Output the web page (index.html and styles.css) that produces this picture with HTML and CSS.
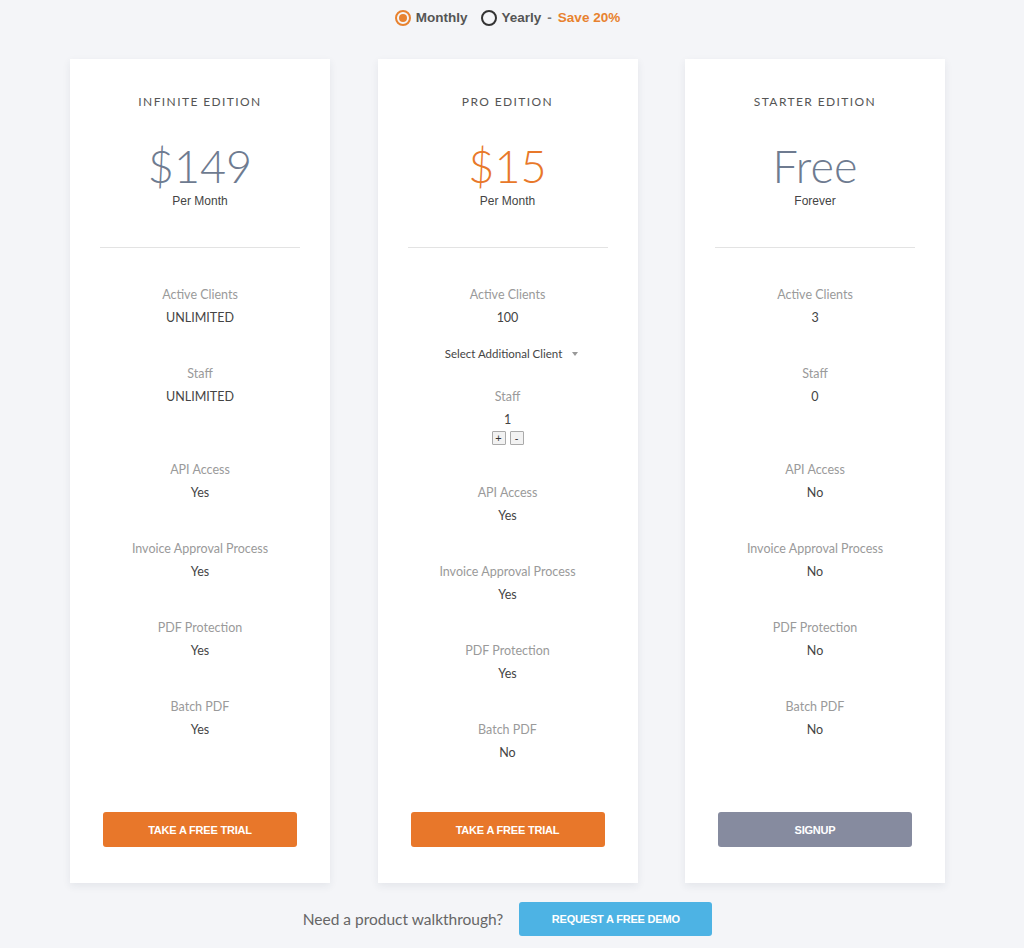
FILE: index.html
```html
<!DOCTYPE html>
<html lang="en">
<head>
<meta charset="utf-8">
<title>Pricing</title>
<link rel="stylesheet" href="styles.css">
</head>
<body>
<div class="page">
<div class="toggle">
  <label class="opt"><span class="radio radio-on"></span>Monthly</label>
  <label class="opt"><span class="radio"></span>Yearly <span class="dash">-</span> <span class="save">Save 20%</span></label>
</div>

<div class="plans">
  <div class="card">
    <div class="edition">INFINITE EDITION</div>
    <div class="price">$149</div>
    <div class="period">Per Month</div>
    <div class="divider"></div>
    <div class="feat"><div class="lbl">Active Clients</div><div class="val">UNLIMITED</div></div>
    <div class="feat"><div class="lbl">Staff</div><div class="val">UNLIMITED</div><div class="ctrl"></div></div>
    <div class="feat"><div class="lbl">API Access</div><div class="val">Yes</div></div>
    <div class="feat"><div class="lbl">Invoice Approval Process</div><div class="val">Yes</div></div>
    <div class="feat"><div class="lbl">PDF Protection</div><div class="val">Yes</div></div>
    <div class="feat"><div class="lbl">Batch PDF</div><div class="val">Yes</div></div>
    <a class="btn btn-orange">TAKE A FREE TRIAL</a>
  </div>

  <div class="card">
    <div class="edition">PRO EDITION</div>
    <div class="price price-orange">$15</div>
    <div class="period">Per Month</div>
    <div class="divider"></div>
    <div class="feat"><div class="lbl">Active Clients</div><div class="val">100</div>
      <div class="select">Select Additional Client <span class="caret"></span></div></div>
    <div class="feat"><div class="lbl">Staff</div><div class="val">1</div>
      <div class="ctrl"><span class="step">+</span><span class="step">-</span></div></div>
    <div class="feat"><div class="lbl">API Access</div><div class="val">Yes</div></div>
    <div class="feat"><div class="lbl">Invoice Approval Process</div><div class="val">Yes</div></div>
    <div class="feat"><div class="lbl">PDF Protection</div><div class="val">Yes</div></div>
    <div class="feat"><div class="lbl">Batch PDF</div><div class="val">No</div></div>
    <a class="btn btn-orange">TAKE A FREE TRIAL</a>
  </div>

  <div class="card">
    <div class="edition">STARTER EDITION</div>
    <div class="price">Free</div>
    <div class="period">Forever</div>
    <div class="divider"></div>
    <div class="feat"><div class="lbl">Active Clients</div><div class="val">3</div></div>
    <div class="feat"><div class="lbl">Staff</div><div class="val">0</div><div class="ctrl"></div></div>
    <div class="feat"><div class="lbl">API Access</div><div class="val">No</div></div>
    <div class="feat"><div class="lbl">Invoice Approval Process</div><div class="val">No</div></div>
    <div class="feat"><div class="lbl">PDF Protection</div><div class="val">No</div></div>
    <div class="feat"><div class="lbl">Batch PDF</div><div class="val">No</div></div>
    <a class="btn btn-gray">SIGNUP</a>
  </div>
</div>

<div class="demo">
  <span class="demo-text">Need a product walkthrough?</span>
  <a class="btn-blue">REQUEST A FREE DEMO</a>
</div>
</div>
</body>
</html>
```

FILE: styles.css
```css
* { box-sizing: border-box; }

body {
  margin: 0;
  background: #f4f5f8;
  font-family: Lato, "Liberation Sans", Arial, sans-serif;
  color: #444;
}

.page {
  padding-right: 9px;
}

.toggle {
  height: 35px;
  display: flex;
  justify-content: center;
  align-items: center;
  gap: 13px;
  font-family: "Liberation Sans", Arial, sans-serif;
  font-weight: bold;
  font-size: 13.5px;
  color: #555;
}

.opt {
  display: flex;
  align-items: center;
  gap: 5px;
}

.radio {
  width: 16px;
  height: 16px;
  border-radius: 50%;
  border: 2px solid #333;
  display: inline-flex;
  align-items: center;
  justify-content: center;
}

.radio-on {
  border-color: #e8822f;
}

.radio-on::after {
  content: "";
  width: 8px;
  height: 8px;
  border-radius: 50%;
  background: #e8822f;
}

.dash { color: #777; margin: 0 1px; }
.save { color: #e8822f; }

.plans {
  display: flex;
  justify-content: center;
  gap: 47.5px;
  margin-top: 24px;
}

.card {
  width: 260px;
  height: 824px;
  background: #fff;
  box-shadow: 0 3px 8px rgba(40, 50, 80, 0.08);
  display: flex;
  flex-direction: column;
  align-items: center;
  padding-top: 35px;
  padding-bottom: 36px;
}

.edition {
  font-size: 12px;
  line-height: 16px;
  letter-spacing: 1.4px;
  color: #555;
}

.price {
  margin-top: 31px;
  font-size: 45px;
  font-weight: 300;
  line-height: 50px;
  color: #6e7b90;
}

.price-orange { color: #e8782a; }

.period {
  margin-top: 2px;
  font-family: "Liberation Sans", Arial, sans-serif;
  font-size: 12px;
  line-height: 16px;
  color: #444;
}

.divider {
  width: 200px;
  height: 1px;
  background: #e3e3e3;
  margin-top: 38px;
  margin-bottom: 35px;
}

.feat {
  display: flex;
  flex-direction: column;
  align-items: center;
  margin-bottom: 33px;
}

.lbl {
  font-size: 12.5px;
  line-height: 23px;
  color: #9a9a9a;
}

.val {
  font-size: 12.5px;
  line-height: 23px;
  color: #444;
}

.select {
  font-size: 11.5px;
  line-height: 23px;
  color: #444;
  margin-top: 13px;
  margin-bottom: -13px;
  display: flex;
  align-items: center;
  padding-left: 8px;
}

.caret {
  width: 0;
  height: 0;
  border-left: 3.5px solid transparent;
  border-right: 3.5px solid transparent;
  border-top: 4px solid #999;
  margin-left: 10px;
}

.ctrl {
  height: 17px;
  display: flex;
  gap: 4px;
  align-items: flex-start;
}

.step {
  width: 14px;
  height: 14px;
  border: 1px solid #aaa;
  background: #f2f2f2;
  font-family: "Liberation Sans", Arial, sans-serif;
  font-size: 11px;
  line-height: 12px;
  text-align: center;
  color: #333;
  border-radius: 1px;
}

.btn {
  margin-top: auto;
  width: 194px;
  height: 35px;
  border-radius: 3px;
  display: flex;
  align-items: center;
  justify-content: center;
  font-family: "Liberation Sans", Arial, sans-serif;
  font-weight: bold;
  font-size: 11px;
  color: #fff;
  letter-spacing: -0.2px;
}

.btn-orange { background: #e8772a; }
.btn-gray { background: #868b9f; }

.demo {
  display: flex;
  justify-content: center;
  align-items: center;
  gap: 16px;
  margin-top: 19px;
}

.demo-text {
  font-size: 15.5px;
  color: #666;
}

.btn-blue {
  width: 193px;
  height: 34px;
  border-radius: 3px;
  background: #4db3e4;
  color: #fff;
  font-family: "Liberation Sans", Arial, sans-serif;
  font-weight: bold;
  font-size: 11px;
  letter-spacing: -0.2px;
  display: flex;
  align-items: center;
  justify-content: center;
}
```
